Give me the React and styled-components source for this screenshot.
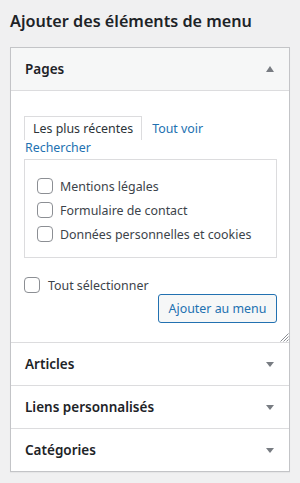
import React, { useState } from 'react';
import styled, { createGlobalStyle } from 'styled-components';

const GlobalStyle = createGlobalStyle`
  html, body {
    margin: 0;
    padding: 0;
    background: #f0f0f1;
  }
  body {
    font-family: "Noto Sans", "Open Sans", sans-serif;
    color: #3c434a;
    font-size: 12.4px;
  }
  * {
    box-sizing: border-box;
  }
`;

const pageItems = [
  'Mentions légales',
  'Formulaire de contact',
  'Données personnelles et cookies',
];

const otherSections = ['Articles', 'Liens personnalisés', 'Catégories'];

const App = () => {
  const [checked, setChecked] = useState({});

  const toggle = (label) => {
    setChecked((prev) => ({ ...prev, [label]: !prev[label] }));
  };

  return (
    <>
      <GlobalStyle />
      <Wrapper>
        <Title>Ajouter des éléments de menu</Title>
        <Panel>
          <SectionHeader open>
            <SectionTitle>Pages</SectionTitle>
            <Arrow up />
          </SectionHeader>
          <SectionBody>
            <Tabs>
              <Tab active>Les plus récentes</Tab>
              <Tab>Tout voir</Tab>
              <Tab wrapped>Rechercher</Tab>
            </Tabs>
            <ItemBox>
              {pageItems.map((label) => (
                <CheckRow key={label}>
                  <Checkbox
                    type="checkbox"
                    checked={!!checked[label]}
                    onChange={() => toggle(label)}
                  />
                  <span>{label}</span>
                </CheckRow>
              ))}
            </ItemBox>
            <SelectAllRow>
              <Checkbox type="checkbox" />
              <span>Tout sélectionner</span>
            </SelectAllRow>
            <ButtonRow>
              <AddButton>Ajouter au menu</AddButton>
            </ButtonRow>
            <ResizeHandle width="11" height="11" viewBox="0 0 11 11">
              <path d="M10.5 2.5 L2.5 10.5 M10.5 5.5 L5.5 10.5 M10.5 8.5 L8.5 10.5" stroke="#8c8f94" strokeWidth="1" />
            </ResizeHandle>
          </SectionBody>
          {otherSections.map((name) => (
            <SectionHeader key={name} divided>
              <SectionTitle>{name}</SectionTitle>
              <Arrow />
            </SectionHeader>
          ))}
        </Panel>
      </Wrapper>
    </>
  );
};

const Wrapper = styled.div`
  padding: 0 10px 10px;
  width: 300px;
`;

const Title = styled.h2`
  margin: 0;
  padding: 8px 0 12px;
  font-size: 16.2px;
  font-weight: 600;
  line-height: 27px;
  color: #1d2327;
`;

const Panel = styled.div`
  background: #fff;
  border: 1px solid #c3c4c7;
  box-shadow: 0 1px 1px rgba(0, 0, 0, 0.04);
`;

const SectionHeader = styled.div`
  display: flex;
  align-items: center;
  justify-content: space-between;
  height: 43px;
  padding: 0 15px 0 14px;
  background: ${({ open }) => (open ? '#f6f7f7' : '#fff')};
  border-top: ${({ divided }) => (divided ? '1px solid #dcdcde' : 'none')};
  border-bottom: ${({ open }) => (open ? '1px solid #dcdcde' : 'none')};
  cursor: pointer;
`;

const SectionTitle = styled.h3`
  margin: 0;
  font-size: 13.5px;
  font-weight: 600;
  color: #1d2327;
`;

const Arrow = styled.span`
  width: 0;
  height: 0;
  border-left: 4px solid transparent;
  border-right: 4px solid transparent;
  ${({ up }) =>
    up
      ? 'border-bottom: 6px solid #787c82;'
      : 'border-top: 5px solid #787c82;'}
`;

const SectionBody = styled.div`
  position: relative;
  padding: 25px 12px 19px 13px;
`;

const Tabs = styled.ul`
  display: flex;
  flex-wrap: wrap;
  column-gap: 9px;
  margin: 0;
  padding: 0;
  list-style: none;
`;

const Tab = styled.li`
  line-height: 18px;
  padding: ${({ active, wrapped }) =>
    active ? '3px 8px 2px' : wrapped ? '0 0 0 1px' : '3px 0 2px 0'};
  border: 1px solid ${({ active }) => (active ? '#dcdcde' : 'transparent')};
  border-bottom: none;
  border-width: ${({ wrapped }) => (wrapped ? '0' : '1px')};
  line-height: ${({ wrapped }) => (wrapped ? '16px' : '18px')};
  color: ${({ active }) => (active ? '#2c3338' : '#2271b1')};
  white-space: nowrap;
  cursor: pointer;
`;

const ItemBox = styled.div`
  border: 1px solid #dcdcde;
  padding: 14px 12px 11px;
  margin-top: 3px;
`;

const CheckRow = styled.label`
  display: flex;
  align-items: center;
  height: 24px;
  gap: 7px;
  color: #3c434a;
`;

const Checkbox = styled.input`
  appearance: none;
  margin: 0;
  width: 16px;
  height: 16px;
  border: 1px solid #8c8f94;
  border-radius: 4px;
  background: #fff;
  flex-shrink: 0;
`;

const SelectAllRow = styled.label`
  display: flex;
  align-items: center;
  gap: 8px;
  height: 16px;
  margin-top: 19px;
  color: #3c434a;
`;

const ButtonRow = styled.div`
  display: flex;
  justify-content: flex-end;
  margin-top: 1px;
`;

const AddButton = styled.button`
  height: 29px;
  width: 119px;
  padding: 0;
  font-family: inherit;
  font-size: 12.4px;
  white-space: nowrap;
  color: #2271b1;
  background: #f6f7f7;
  border: 1px solid #2271b1;
  border-radius: 3px;
  cursor: pointer;
`;

const ResizeHandle = styled.svg`
  position: absolute;
  right: 0;
  bottom: 0;
`;

export default App;
